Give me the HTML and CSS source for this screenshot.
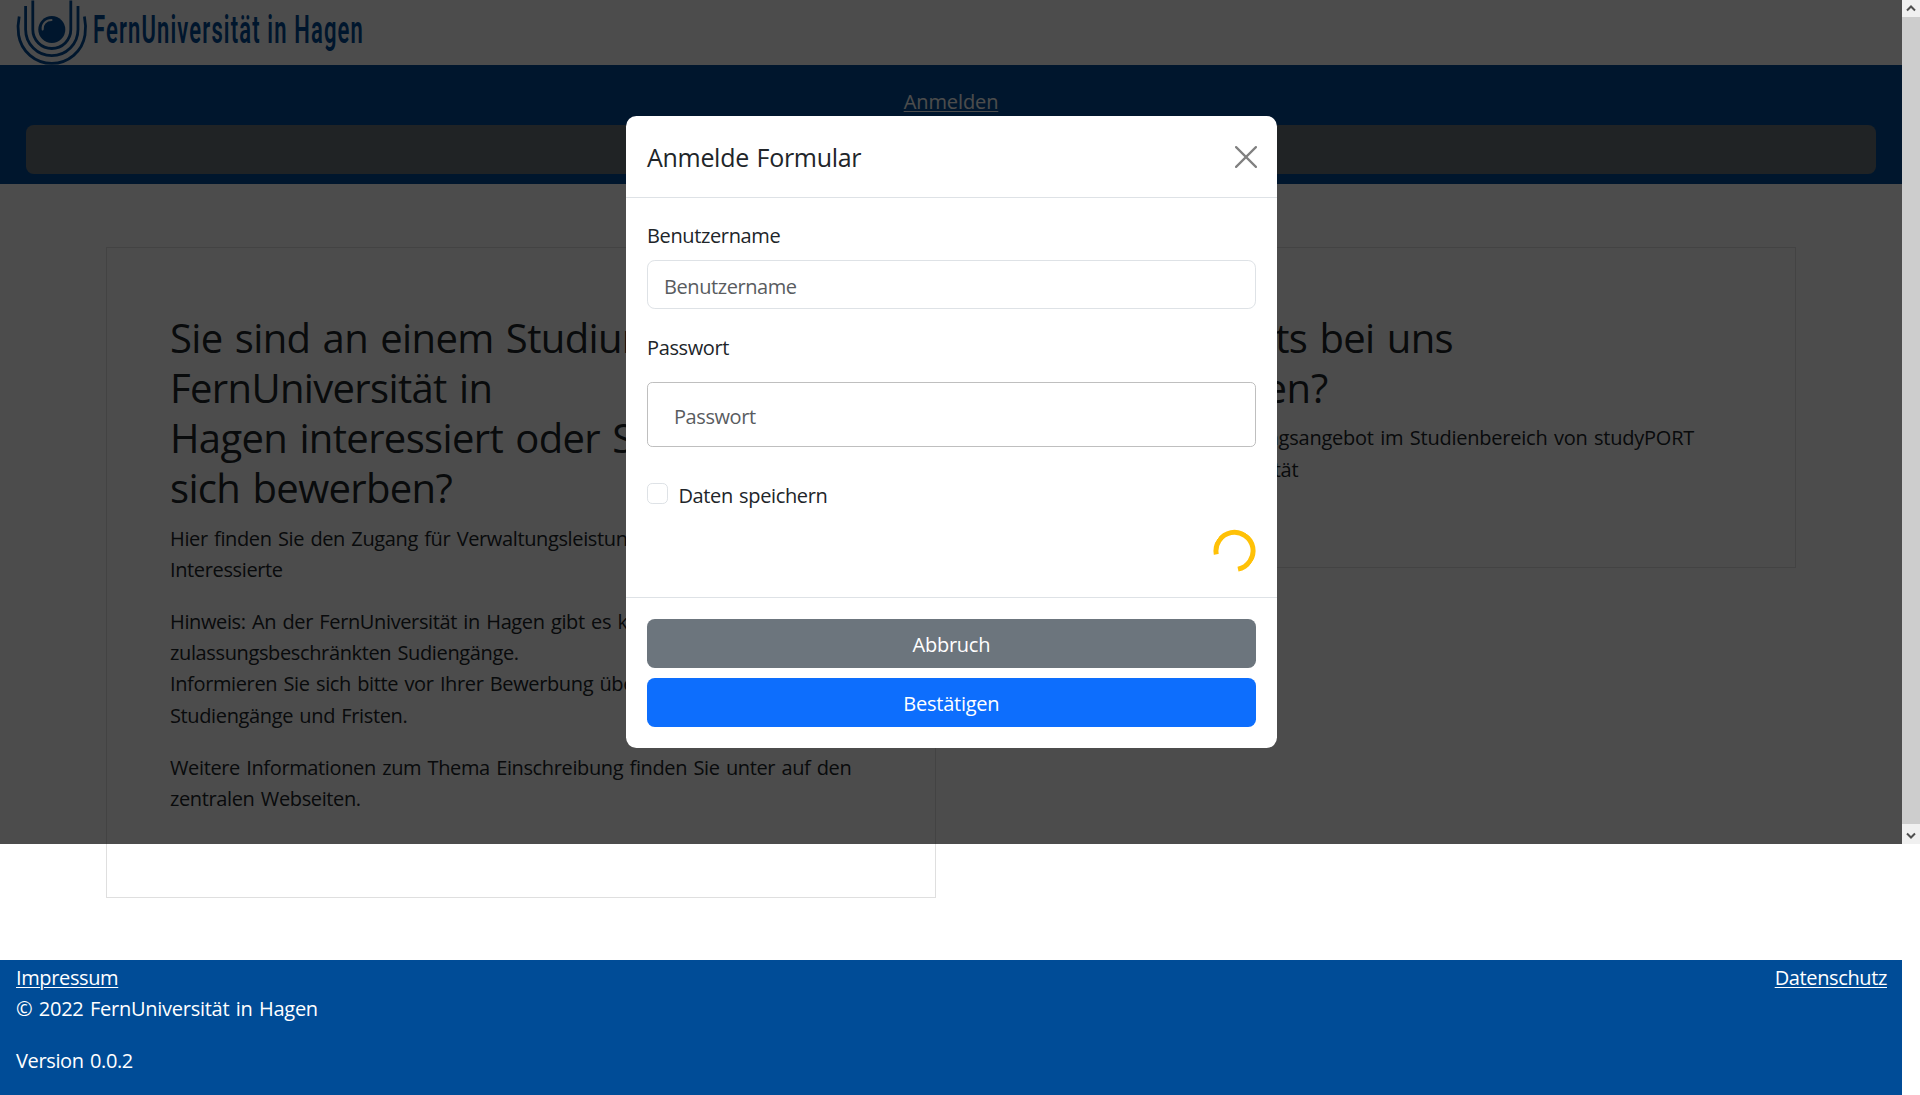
FILE: index.html
```html
<!DOCTYPE html>
<html lang="de">
<head>
<meta charset="utf-8">
<title>FernUniversität in Hagen</title>
<link rel="stylesheet" href="styles.css">
</head>
<body>
<div class="page">
  <header class="brand">
    <svg class="logo" width="380" height="65" viewBox="0 0 380 65" role="img" aria-label="FernUniversität in Hagen">
      <g fill="none" stroke="#004c97" stroke-width="2.8">
        <path d="M32.8 0.500V29.500A19 19 0 0 0 70.800 29.500V0.500"/>
        <path d="M25.600 6V29.500A26.200 26.200 0 0 0 78 29.500V6"/>
        <path d="M19.200 16.500C17.600 24 17.800 29 18.600 35A33.600 33.600 0 0 0 85 35C85.800 29 86 24 84.400 16.500"/>
      </g>
      <circle cx="51.800" cy="29.500" r="13.500" fill="#004c97"/>
      <path d="M42.700 29.500C42 24 46 20 51.500 20" fill="none" stroke="#fff" stroke-width="2" stroke-linecap="round"/>
      <text class="logo-text" x="93" y="42.700" textLength="271" lengthAdjust="spacingAndGlyphs">FernUniversität in Hagen</text>
    </svg>
  </header>
  <nav class="topnav">
    <a class="login-link" href="#">Anmelden</a>
    <div class="nav-button"></div>
  </nav>
  <main class="cards">
    <section class="card">
      <h2>Sie sind an einem Studium an der FernUniversität in<br>Hagen interessiert oder Sie möchten sich bewerben?</h2>
      <p>Hier finden Sie den Zugang für Verwaltungsleistungen für<br>Interessierte</p>
      <p>Hinweis: An der FernUniversität in Hagen gibt es keine<br>zulassungsbeschränkten Sudiengänge.<br>Informieren Sie sich bitte vor Ihrer Bewerbung über die<br>Studiengänge und Fristen.</p>
      <p>Weitere Informationen zum Thema Einschreibung finden Sie unter auf den<br>zentralen Webseiten.</p>
    </section>
    <section class="card card-students">
      <h2>Sie sind bereits bei uns<br><span>eingeschrieben?</span></h2>
      <p>Hier finden Sie das Leistungsangebot im Studienbereich von studyPORT<br>im Portal der FernUniversität</p>
    </section>
  </main>
  <footer class="footer">
    <div class="footer-links"><a href="#">Impressum</a><a href="#">Datenschutz</a></div>
    <p class="copyright">© 2022 FernUniversität in Hagen</p>
    <p>Version 0.0.2</p>
  </footer>
</div>

<div class="backdrop">
  <div class="modal">
    <div class="modal-header">
      <h5>Anmelde Formular</h5>
      <svg width="22" height="22" viewBox="0 0 16 16"><path d="M.8.8l14.400 14.400M15.200.8L.8 15.200" stroke="#808080" stroke-width="1.600" stroke-linecap="round"/></svg>
    </div>
    <form class="modal-body">
      <label for="user">Benutzername</label>
      <input class="field" id="user" type="text" placeholder="Benutzername">
      <label for="pass">Passwort</label>
      <input class="field field-large" id="pass" type="password" placeholder="Passwort">
      <label class="check"><input type="checkbox">Daten speichern</label>
      <div class="spinner"></div>
    </form>
    <div class="modal-footer">
      <button class="btn btn-secondary">Abbruch</button>
      <button class="btn btn-primary">Bestätigen</button>
    </div>
  </div>
</div>

<div class="scrollbar">
  <svg width="18" height="17" viewBox="0 0 18 17"><path d="M5 10.500L9 6.500L13 10.500" fill="none" stroke="#505050" stroke-width="2"/></svg>
  <svg width="18" height="20" viewBox="0 0 18 20"><path d="M5 9.500L9 13.500L13 9.500" fill="none" stroke="#505050" stroke-width="2"/></svg>
</div>
</body>
</html>
```
FILE: styles.css
```css
* { box-sizing: border-box; }
html { font-size: 20.8px; }
body {
  margin: 0;
  position: relative;
  height: 1095px;
  overflow: hidden;
  background: #fff;
  color: #212529;
  font-family: "Open Sans", "Noto Sans", sans-serif;
  font-size: 20px;
  line-height: 31.2px;
  letter-spacing: -0.37px;
  word-spacing: 1.5px;
}
h2, h5, p { margin: 0; font-weight: 400; }
.page { width: 1902px; height: 1095px; display: flex; flex-direction: column; }
.brand { height: 65px; }
.logo { display: block; }
.logo-text {
  font: 600 38px Roboto, sans-serif;
  letter-spacing: 2px;
  word-spacing: 0;
  fill: #004c97;
}
.topnav {
  height: 119px;
  padding: 20.500px 26px 10px;
  background: #004c97;
  display: flex;
  flex-direction: column;
  align-items: center;
  justify-content: space-between;
}
.login-link { color: #fff; letter-spacing: -0.1px; }
.nav-button { width: 100%; height: 49px; border-radius: 7.800px; background: #6c757d; }
.cards {
  flex: 1;
  display: flex;
  align-items: flex-start;
  justify-content: center;
  gap: 30px;
  padding-top: 63px;
}
.card { width: 830px; border: 1px solid #dfdfdf; padding: 65px 63px 62px; }
.card h2 { font-size: 40px; line-height: 50px; letter-spacing: -0.65px; word-spacing: 2.500px; margin-bottom: 9.800px; }
.card p { margin-bottom: 20.800px; }
.card-students { padding-bottom: 61.500px; }
.card-students h2 { margin-bottom: 9.300px; }
.card-students h2 span { letter-spacing: -0.25px; }
.card-students p { letter-spacing: -0.23px; padding-left: 1px; }
.footer {
  height: 135px;
  padding: 2px 15px 0 16px;
  background: #004c97;
  color: #fff;
}
.footer-links { display: flex; justify-content: space-between; }
.footer a { color: #fff; }
.footer p { margin-bottom: 20.800px; }
.footer .copyright { letter-spacing: -0.26px; }
a { text-underline-offset: 2px; text-decoration-thickness: 1px; }

.backdrop {
  position: absolute;
  left: 0;
  top: 0;
  width: 1902px;
  height: 844px;
  background: rgba(0, 0, 0, 0.7);
  display: flex;
  justify-content: center;
  align-items: flex-start;
  padding-top: 116px;
}
.modal { width: 651px; height: 632px; border-radius: 10.400px; background: #fff; }
.modal-header {
  display: flex;
  align-items: center;
  justify-content: space-between;
  height: 82px;
  padding: 20.800px 20px 20.800px 21.500px;
  border-bottom: 1px solid #dee2e6;
}
.modal-header h5 { padding-top: 2px; font-size: 25px; line-height: 39px; letter-spacing: -0.3px; }
.modal-body {
  display: flex;
  flex-direction: column;
  height: 399px;
  padding: 21.800px 20.800px 20px 21.500px;
}
.field {
  width: 100%;
  height: 48.800px;
  margin: 9.400px 0 22.400px;
  padding: 3px 16px 0;
  border: 1px solid #dee2e6;
  border-radius: 7.800px;
  font: inherit;
  letter-spacing: -0.42px;
}
.field::placeholder { color: #595c5f; }
.field-large { height: 65px; margin: 19.200px 0 32.600px; padding: 4px 26px 0; border-color: #bfbfbf; border-radius: 5.200px; }
.check { display: flex; gap: 10.400px; }
.check input {
  appearance: none;
  width: 21px;
  height: 21px;
  margin: 3.600px 0 0;
  border: 1px solid #dee2e6;
  border-radius: 5.200px;
}
.spinner {
  align-self: flex-end;
  width: 41.600px;
  height: 41.600px;
  margin-top: 19.400px;
  border: 5.200px solid #ffc107;
  border-right-color: transparent;
  border-radius: 50%;
  transform: rotate(124deg);
}
.modal-footer {
  display: flex;
  flex-direction: column;
  gap: 10.400px;
  padding: 20.800px 20.800px 20.800px 21.500px;
  border-top: 1px solid #dee2e6;
}
.btn {
  height: 48.800px;
  padding: 3px 0 0;
  border: 0;
  border-radius: 7.800px;
  color: #fff;
  font: inherit;
  letter-spacing: -0.25px;
}
.btn-secondary { background: #6c757d; }
.btn-primary { background: #0d6efd; }
.scrollbar {
  position: absolute;
  right: 0;
  top: 0;
  width: 18px;
  height: 844px;
  background: #cdcdcd;
  display: flex;
  flex-direction: column;
  justify-content: space-between;
}
.scrollbar svg { background: #f0f0f0; }
```
